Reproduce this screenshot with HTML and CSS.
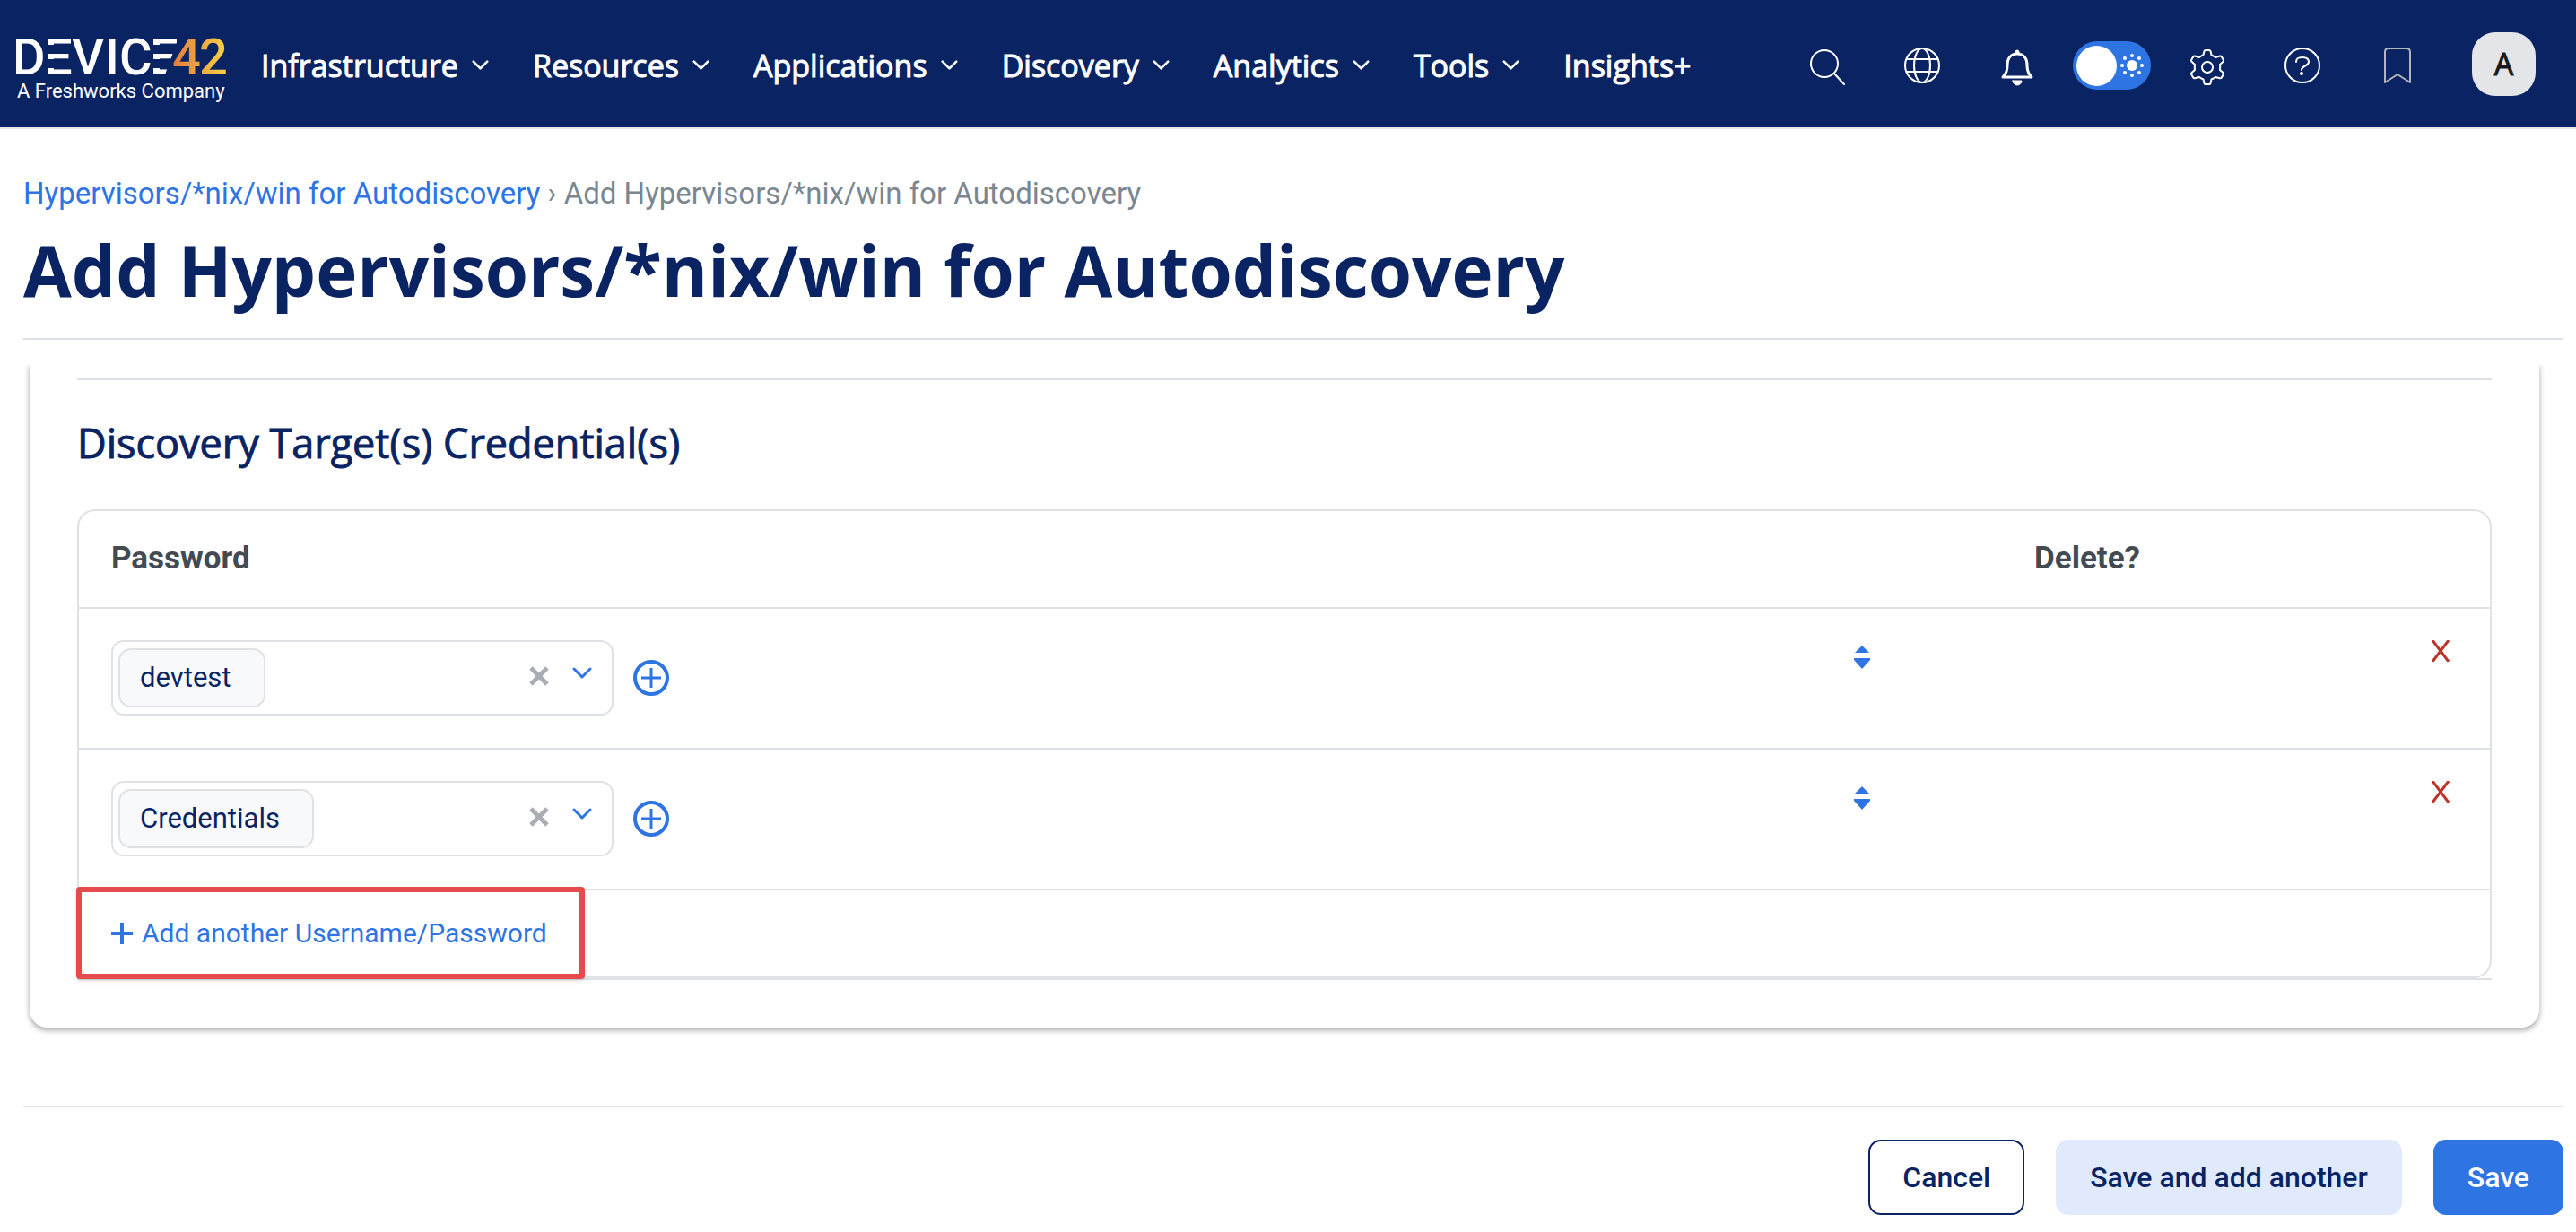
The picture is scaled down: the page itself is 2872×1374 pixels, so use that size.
FILE: index.html
```html
<!DOCTYPE html>
<html lang="en">
<head>
<meta charset="utf-8">
<title>Add Hypervisors/*nix/win for Autodiscovery</title>
<link rel="stylesheet" href="styles.css">
</head>
<body>
<svg class="sprite" aria-hidden="true">
  <symbol id="chevron" viewBox="0 0 22 14"><path d="M2 2l9 9 9-9" fill="none" stroke="currentColor" stroke-width="3" stroke-linecap="round" stroke-linejoin="round"/></symbol>
  <symbol id="clear" viewBox="0 0 24 24"><path d="M3 3l18 18M21 3L3 21" fill="none" stroke="currentColor" stroke-width="5"/></symbol>
  <symbol id="add-circle" viewBox="0 0 40 40"><circle cx="20" cy="20" r="18" fill="none" stroke="currentColor" stroke-width="4"/><path d="M20 9v22M9 20h22" stroke="currentColor" stroke-width="3"/></symbol>
  <symbol id="sort" viewBox="0 0 20 28"><path d="M10 1l8 8H2zM1 15h18v2l-9 10-9-10z" fill="currentColor"/></symbol>
  <symbol id="remove" viewBox="0 0 22 24"><path d="M2 0l18 24M20 0L2 24" fill="none" stroke="currentColor" stroke-width="3"/></symbol>
</svg>

<header class="topbar">
  <a class="logo" href="#" aria-label="Device42, a Freshworks Company">
    <svg class="logo-art" width="240" height="80" viewBox="0 0 240 80">
      <defs>
        <linearGradient id="flame" gradientUnits="userSpaceOnUse" x1="182" y1="0" x2="240" y2="0"><stop offset="0" stop-color="#e37a3d"/><stop offset="1" stop-color="#f6cf45"/></linearGradient>
      </defs>
      <text class="logo-name" fill="#fff" y="49" x="4 39 70 107 123 157">DEVICE</text>
      <path class="logo-cut" d="M40 16h29v10H40zM40 32h29v10H40zM159 16h31v10h-31zM159 32h31v10h-31zM189 8h11v44h-27z"/>
      <text class="logo-name" fill="url(#flame)" y="49" x="182 212">42</text>
      <text class="logo-tag" x="9" y="75">A Freshworks Company</text>
    </svg>
  </a>
  <nav class="menu" aria-label="Main">
    <button class="menu-item" type="button">Infrastructure <svg class="menu-chevron"><use href="#chevron"/></svg></button>
    <button class="menu-item" type="button">Resources <svg class="menu-chevron"><use href="#chevron"/></svg></button>
    <button class="menu-item" type="button">Applications <svg class="menu-chevron"><use href="#chevron"/></svg></button>
    <button class="menu-item" type="button">Discovery <svg class="menu-chevron"><use href="#chevron"/></svg></button>
    <button class="menu-item" type="button">Analytics <svg class="menu-chevron"><use href="#chevron"/></svg></button>
    <button class="menu-item" type="button">Tools <svg class="menu-chevron"><use href="#chevron"/></svg></button>
    <a class="menu-item" href="#">Insights+</a>
  </nav>
  <div class="tools">
    <button class="tool" type="button" aria-label="Search"><svg class="tool-icon" viewBox="0 0 40 40"><circle cx="17" cy="17" r="15"/><path d="M28 28l11 12"/></svg></button>
    <button class="tool" type="button" aria-label="Language"><svg class="tool-icon" viewBox="0 0 40 40"><circle cx="20" cy="19" r="19"/><ellipse cx="20" cy="19" rx="9" ry="19"/><path d="M3 12h34M3 26h34"/></svg></button>
    <button class="tool" type="button" aria-label="Notifications"><svg class="tool-icon" viewBox="0 0 40 40"><path d="M4 32c4-4 5-7 5-13 0-8 4-13 11-13s11 5 11 13c0 6 1 9 5 13z" stroke-width="3"/><path d="M18 5V4a2 2 0 0 1 4 0v1zM15 36h10a5 5 0 0 1-10 0z" class="solid"/></svg></button>
    <label class="theme" aria-label="Light theme"><input class="theme-input" type="checkbox"><svg class="theme-sun" viewBox="0 0 26 26"><circle cx="13" cy="13" r="6"/><circle cx="13" cy="2" r="2"/><circle cx="13" cy="24" r="2"/><circle cx="2" cy="13" r="2"/><circle cx="24" cy="13" r="2"/><circle cx="5" cy="5" r="2"/><circle cx="21" cy="5" r="2"/><circle cx="5" cy="21" r="2"/><circle cx="21" cy="21" r="2"/></svg></label>
    <button class="tool" type="button" aria-label="Settings"><svg class="tool-icon" viewBox="0 0 40 40"><path d="M15.500 7L16.500 3Q17 2 18 2h4q1 0 1.500 1l1 4.500q2.500 1 4.500 2.500l5-1.500q1.200-.2 1.800.8l2 3.500q.6 1-.3 2L34 18q.4 3 0 6l3.500 3q.9.900.3 2l-2 3.500q-.6 1-1.800.8l-5-1.300q-2 1.500-4.500 2.500l-1 4.500q-.5 1-1.500 1h-4q-1 0-1.500-1l-1-4.500Q13 33.500 11 32l-5 1.300q-1.200.2-1.800-.8l-2-3.500q-.6-1.100.3-2L6 24q-.4-3 0-6l-3.500-3.200q-.9-1-.3-2l2-3.500q.6-1 1.800-.8L11 10q2-1.500 4.500-3z"/><circle cx="20" cy="21" r="6"/></svg></button>
    <button class="tool" type="button" aria-label="Help"><svg class="tool-icon" viewBox="0 0 40 40"><circle cx="20" cy="19" r="19"/><path d="M13 15c0-4 2-5 7-5 4 0 7 1 7 5 0 5-8 4-8 9"/><circle cx="19" cy="28" r="2" class="dot"/></svg></button>
    <button class="tool muted" type="button" aria-label="Bookmark"><svg class="tool-icon" viewBox="0 0 40 40"><path d="M6 38V4q0-4 4-4h20q4 0 4 4v34l-14-9z"/></svg></button>
    <button class="avatar" type="button" aria-label="Account">A</button>
  </div>
</header>

<main class="page">
  <nav class="crumbs" aria-label="Breadcrumb"><a class="crumb-link" href="#">Hypervisors/*nix/win for Autodiscovery</a> › Add Hypervisors/*nix/win for Autodiscovery</nav>
  <h1 class="title">Add Hypervisors/*nix/win for Autodiscovery</h1>

  <form>
    <div class="scroller">
      <section class="card">
        <div class="section">
          <h2 class="section-title">Discovery Target(s) Credential(s)</h2>
          <div class="inline-group">
            <table class="grid">
              <thead>
                <tr><th class="col-password" scope="col">Password</th><td class="col-sort"></td><th class="col-delete" scope="col">Delete?</th></tr>
              </thead>
              <tbody>
                <tr>
                  <td>
                    <div class="field">
                      <div class="picker">
                        <select class="chip" aria-label="Password 1"><option>devtest</option></select>
                        <button class="icon-btn clear" type="button" aria-label="Clear"><svg><use href="#clear"/></svg></button>
                        <svg class="picker-chevron"><use href="#chevron"/></svg>
                      </div>
                      <button class="icon-btn add-new" type="button" aria-label="New password"><svg><use href="#add-circle"/></svg></button>
                    </div>
                  </td>
                  <td><button class="icon-btn sort" type="button" aria-label="Reorder"><svg><use href="#sort"/></svg></button></td>
                  <td class="cell-delete"><button class="icon-btn remove" type="button" aria-label="Delete"><svg><use href="#remove"/></svg></button></td>
                </tr>
                <tr>
                  <td>
                    <div class="field">
                      <div class="picker">
                        <select class="chip" aria-label="Password 2"><option>Credentials</option></select>
                        <button class="icon-btn clear" type="button" aria-label="Clear"><svg><use href="#clear"/></svg></button>
                        <svg class="picker-chevron"><use href="#chevron"/></svg>
                      </div>
                      <button class="icon-btn add-new" type="button" aria-label="New password"><svg><use href="#add-circle"/></svg></button>
                    </div>
                  </td>
                  <td><button class="icon-btn sort" type="button" aria-label="Reorder"><svg><use href="#sort"/></svg></button></td>
                  <td class="cell-delete"><button class="icon-btn remove" type="button" aria-label="Delete"><svg><use href="#remove"/></svg></button></td>
                </tr>
              </tbody>
            </table>
            <div class="add-row">
              <a class="add-link" href="#"><svg class="plus" viewBox="0 0 24 24"><path d="M12 0v24M0 12h24"/></svg>Add another Username/Password</a>
              <span class="highlight"></span>
            </div>
          </div>
        </div>
      </section>
    </div>
    <footer class="actions">
      <button class="btn btn-outline" type="button">Cancel</button>
      <button class="btn btn-soft" type="submit">Save and add another</button>
      <button class="btn btn-primary" type="submit">Save</button>
    </footer>
  </form>
</main>
</body>
</html>
```
FILE: styles.css
```css
:root {
  --navy: #0a2463;
  --blue: #2f74e3;
  --line: #dee2e6;
  --body: Roboto, "Liberation Sans", sans-serif;
  --heading: "Open Sans", "Noto Sans", sans-serif;
}

* { box-sizing: border-box; }

body {
  margin: 0;
  background: #fff;
  color: var(--navy);
  font: 400 30px/40px var(--body);
}

button, select { font: inherit; color: inherit; }
a { color: inherit; text-decoration: none; }
svg { display: block; }
.sprite { display: none; }

/* Top bar */
.topbar {
  display: flex;
  align-items: center;
  height: 144px;
  padding: 0 45px 0 10px;
  border-bottom: 2px solid #e4e6e8;
  background: var(--navy);
  color: #fff;
}
.logo { margin-right: 41px; padding-top: 6px; }
.logo-art { overflow: visible; }
.logo-name { font: 500 56px var(--body); }
.logo-cut { fill: var(--navy); }
.logo-tag { font: 400 22px var(--body); fill: #fff; }

.menu { display: flex; gap: 49px; padding-top: 4px; }
.menu-item {
  display: flex;
  align-items: center;
  gap: 15px;
  padding: 0;
  border: 0;
  background: none;
  font: 500 34px/48px var(--heading);
  -webkit-text-stroke: 1px currentColor;
}
.menu-chevron { width: 19px; height: 12px; }

.tools { display: flex; align-items: center; margin-left: auto; }
.tool {
  display: flex;
  justify-content: center;
  width: 106px;
  padding: 6px 0 0;
  border: 0;
  background: none;
  color: #fff;
}
.tool.muted { color: #b5b5b5; }
.tool-icon {
  width: 40px;
  height: 40px;
  overflow: visible;
  fill: none;
  stroke: currentColor;
  stroke-width: 2;
  stroke-linejoin: round;
  stroke-linecap: round;
}
.tool-icon .solid { fill: currentColor; stroke-width: 1; }
.tool-icon .dot { fill: currentColor; stroke: none; }
.theme {
  display: flex;
  align-items: center;
  gap: 4px;
  width: 87px;
  height: 54px;
  margin: 4px 10px 0 9px;
  padding: 0 4px;
  border-radius: 27px;
  background: var(--blue);
}
.theme-input {
  appearance: none;
  width: 45px;
  height: 45px;
  margin: 0;
  border-radius: 50%;
  background: #fff;
}
.theme-sun { width: 26px; height: 26px; fill: #fff; }
.avatar {
  width: 71px;
  height: 71px;
  margin-left: 30px;
  padding: 0;
  border: 0;
  border-radius: 26px;
  background: #e3e5e9;
  color: #1a1a1a;
  font: 500 34px/48px var(--heading);
  -webkit-text-stroke: 1px currentColor;
}

/* Page heading */
.page { padding: 52px 14px 20px 26px; }
.crumbs { color: #7a8791; font-size: 33px; }
.crumb-link { color: var(--blue); }
.title {
  margin: 11px 0 27px;
  padding-bottom: 22px;
  border-bottom: 2px solid var(--line);
  font: 700 78px/108px var(--heading);
}

/* Form card */
.scroller { padding: 0 27px 87px 7px; overflow: hidden; }
.card {
  padding: 16px 53px 53px;
  border-radius: 0 0 20px 20px;
  box-shadow: 0 3px 6px rgba(0, 0, 0, .35);
}
.section { border-top: 2px solid var(--line); }
.section-title {
  margin: 0;
  padding: 38px 0 42px;
  font: 500 45px/64px var(--heading);
  -webkit-text-stroke: 1px currentColor;
}
.inline-group { border-bottom: 2px solid var(--line); }
.grid {
  width: 100%;
  border: 2px solid var(--line);
  border-bottom: 0;
  border-radius: 20px 20px 0 0;
  border-spacing: 0;
  table-layout: fixed;
}
.grid th, .grid td {
  padding: 35px 36px 36px;
  border-bottom: 2px solid var(--line);
  text-align: left;
  vertical-align: top;
}
.grid thead th, .grid thead td { padding: 33px 36px 34px; }
.grid th { color: #434a51; font-size: 35px; font-weight: 700; }
.grid .col-sort { width: 202px; }
.grid .col-delete { width: 544px; }
.field { display: flex; align-items: center; gap: 22px; }
.picker {
  display: flex;
  align-items: center;
  width: 560px;
  height: 84px;
  padding: 0 22px 0 6px;
  border: 2px solid var(--line);
  border-radius: 14px;
}
.chip {
  appearance: none;
  height: 66px;
  padding: 0 36px 0 22px;
  border: 2px solid var(--line);
  border-radius: 14px;
  background: #f8f9fb;
  font-size: 31px;
}
.icon-btn { padding: 0; border: 0; background: none; color: var(--blue); }
.icon-btn svg { width: 100%; height: 100%; }
.clear { width: 24px; height: 24px; margin: 0 25px 4px auto; color: #a8adb4; }
.picker-chevron { width: 22px; height: 14px; margin-bottom: 10px; color: var(--blue); }
.add-new { width: 40px; height: 40px; }
.sort { display: block; width: 20px; height: 28px; margin-top: 5px; }
.remove { display: block; width: 22px; height: 24px; margin: 0 8px 0 auto; color: #bc352b; }

.add-row {
  position: relative;
  padding: 28px 36px 26px;
  border: 2px solid var(--line);
  border-top: 0;
  border-radius: 0 0 20px 20px;
}
.add-link { display: inline-flex; align-items: center; gap: 10px; color: var(--blue); }
.plus { width: 24px; height: 24px; fill: none; stroke: currentColor; stroke-width: 4; }
/* Callout frame over the add link */
.highlight {
  position: absolute;
  top: -4px;
  left: -3px;
  width: 567px;
  height: 103px;
  border: 6px solid #e64a4c;
  border-radius: 4px;
  box-shadow: 0 2px 4px rgba(0, 0, 0, .15);
}

/* Form actions */
.actions {
  display: flex;
  justify-content: flex-end;
  gap: 35px;
  padding-top: 36px;
  border-top: 2px solid var(--line);
}
.btn {
  height: 84px;
  padding: 0 36px;
  border: 2px solid transparent;
  border-radius: 14px;
  font-size: 32px;
  font-weight: 500;
}
.btn-outline { border-color: var(--navy); background: #fff; }
.btn-soft { background: #e1eafd; }
.btn-primary { background: var(--blue); color: #fff; }
```
